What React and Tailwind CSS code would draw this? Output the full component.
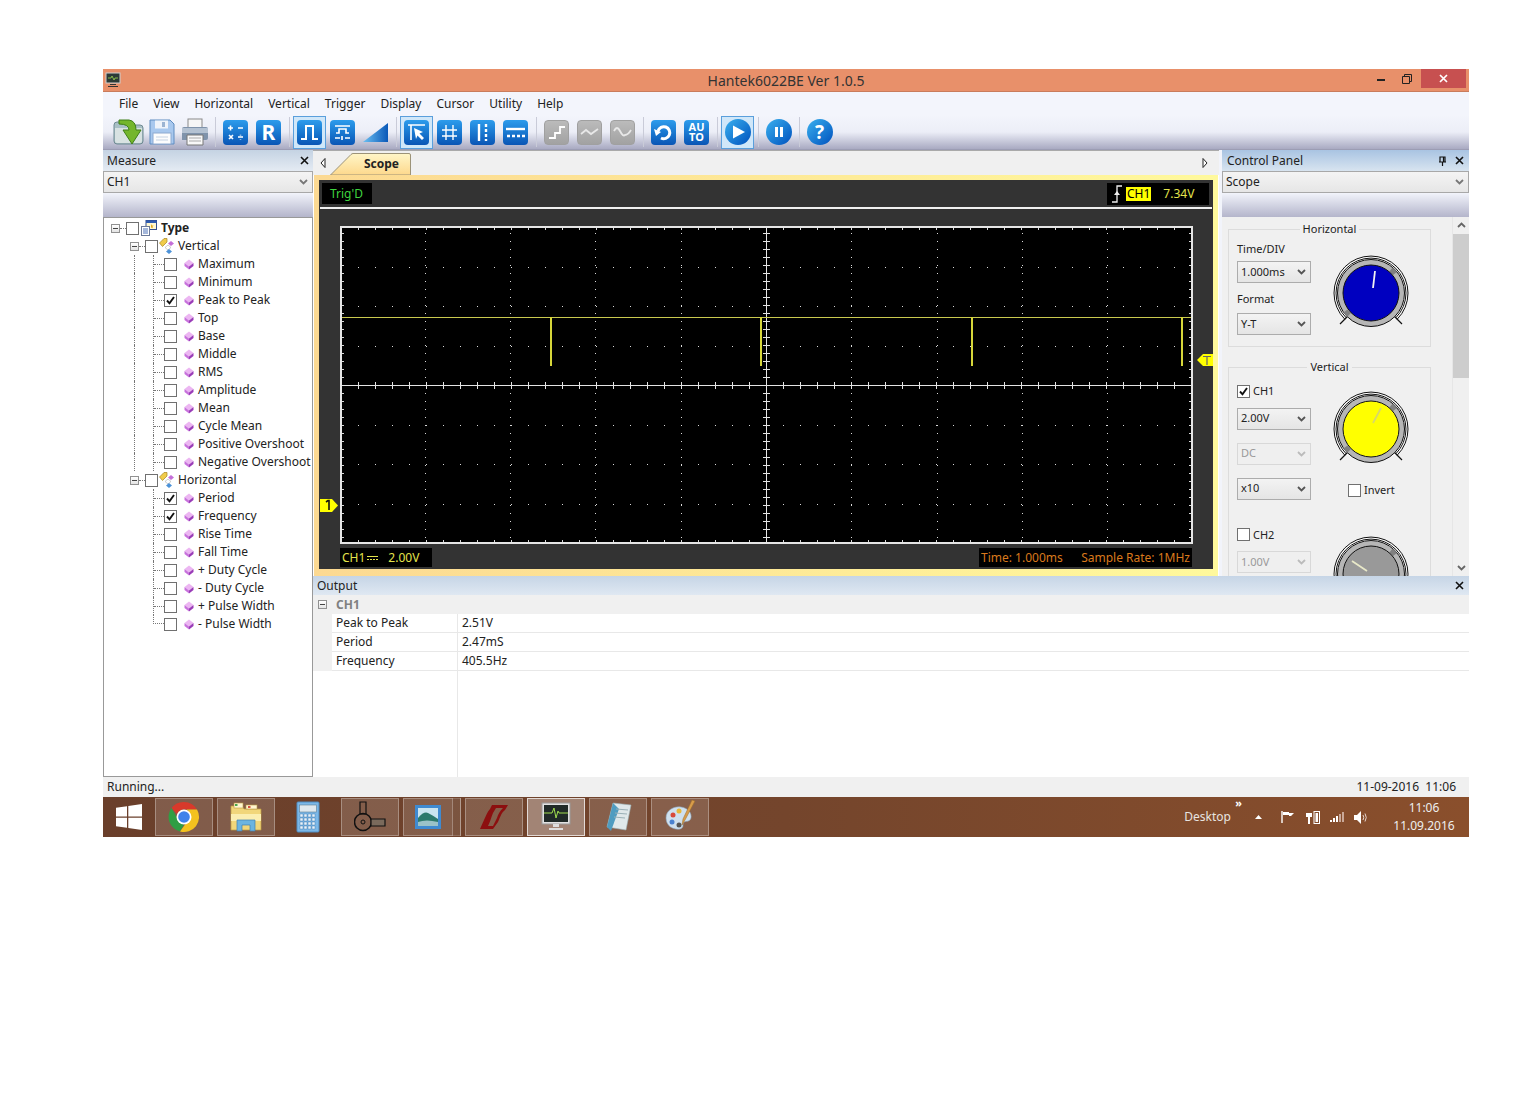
const MENU = ["File", "View", "Horizontal", "Vertical", "Trigger", "Display", "Cursor", "Utility", "Help"];

const VERTICAL_ITEMS = [
  ["Maximum"], ["Minimum"], ["Peak to Peak", true], ["Top"], ["Base"], ["Middle"], ["RMS"],
  ["Amplitude"], ["Mean"], ["Cycle Mean"], ["Positive Overshoot"], ["Negative Overshoot"],
];
const HORIZONTAL_ITEMS = [
  ["Period", true], ["Frequency", true], ["Rise Time"], ["Fall Time"],
  ["+ Duty Cycle"], ["- Duty Cycle"], ["+ Pulse Width"], ["- Pulse Width"],
];
const OUTPUT_ROWS = [["Peak to Peak", "2.51V"], ["Period", "2.47mS"], ["Frequency", "405.5Hz"]];

function Chevron({ color = "#555" }) {
  return (
    <svg width="9" height="6" viewBox="0 0 9 6">
      <path d="M1 1l3.5 3.5L8 1" fill="none" stroke={color} strokeWidth="1.8" />
    </svg>
  );
}

function CloseX({ size = 9 }) {
  return (
    <svg width={size} height={size} viewBox="0 0 9 9">
      <path d="M1 1l7 7M8 1l-7 7" stroke="#111" strokeWidth="1.6" />
    </svg>
  );
}

function Check({ on }) {
  return (
    <div className="w-[13px] h-[13px] shrink-0 border border-[#707070] bg-white flex items-center justify-center">
      {on && (
        <svg width="11" height="11" viewBox="0 0 11 11">
          <path d="M2 5.5l2.5 2.8L9 2" fill="none" stroke="#111" strokeWidth="1.9" />
        </svg>
      )}
    </div>
  );
}

function PlusBox() {
  return (
    <div className="w-[9px] h-[9px] shrink-0 border border-[#919191] bg-linear-to-b from-white to-[#e4e4e4] flex items-center justify-center">
      <div className="w-[5px] h-px bg-[#444]" />
    </div>
  );
}

function Diamond() {
  return (
    <svg width="10" height="11" viewBox="0 0 10 11" className="shrink-0">
      <path d="M5 0.5L9.5 4 5 7.5.5 4z" fill="#ecb6f2" />
      <path d="M.5 4L5 7.5V10.5L.5 7z" fill="#c872dc" />
      <path d="M9.5 4L5 7.5V10.5L9.5 7z" fill="#9a3cb8" />
    </svg>
  );
}

function TypeIcon() {
  return (
    <svg width="16" height="16" viewBox="0 0 16 16" className="shrink-0">
      <rect x="5" y="0.5" width="10.5" height="9" fill="#fff8d0" stroke="#334d8c" />
      <rect x="5" y="0.5" width="10.5" height="2.5" fill="#2f5bb0" />
      <path d="M10 4l1 1.4 1.6.2-1.1 1.1.3 1.6-1.8-.8" fill="#e3a91f" />
      <rect x="0.5" y="6.5" width="8" height="9" fill="#fff" stroke="#6c7a99" />
      <path d="M2 9h5M2 11h5M2 13h5" stroke="#4a70b8" />
    </svg>
  );
}

function GroupIcon() {
  return (
    <svg width="16" height="16" viewBox="0 0 16 16" className="shrink-0">
      <path d="M0.5 5L5 .5h3V4L3.5 8.5z" fill="#f0cc4a" stroke="#a78420" strokeWidth=".7" />
      <path d="M12 3l3 2.5-3 2.5-3-2.5z" fill="#c46fd8" />
      <path d="M9 7l3 2.5-3 2.5-3-2.5z" fill="#fff" stroke="#9c9c9c" strokeWidth=".5" />
      <path d="M10 11l3 2.5-3 2.5-3-2.5z" fill="#4c92d8" />
    </svg>
  );
}

function Leaf({ label, on, trunk, last }) {
  return (
    <div className="flex h-[18px] items-center">
      <div className="w-[30px]" />
      <div className={trunk ? "w-[19px] h-full border-l border-dotted border-[#777]" : "w-[19px]"} />
      {last ? (
        <div className="w-[11px] h-[9px] self-start border-l border-b border-dotted border-[#777]" />
      ) : (
        <div className="w-[11px] h-full border-l border-dotted border-[#777] flex items-center">
          <div className="w-full border-t border-dotted border-[#777]" />
        </div>
      )}
      <Check on={on} />
      <div className="ml-[7px]"><Diamond /></div>
      <span className="ml-[4px] whitespace-nowrap">{label}</span>
    </div>
  );
}

function Group({ label, trunk }) {
  return (
    <div className="flex h-[18px] items-center">
      <div className={trunk ? "w-[26px] h-full" : "w-[26px]"} />
      <PlusBox />
      <div className="w-[6px] border-t border-dotted border-[#777]" />
      <Check />
      <div className="ml-px"><GroupIcon /></div>
      <span className="ml-[3px]">{label}</span>
    </div>
  );
}

function DockHeader({ title, active, children }) {
  return (
    <div className={active
      ? "h-[21px] flex items-center px-[5px] bg-linear-to-b from-[#a9c4e2] to-[#d8e4f0]"
      : "h-[21px] flex items-center px-[4px] bg-linear-to-b from-[#c5d3e3] to-[#e4ebf3]"}>
      <span className="text-[#222]">{title}</span>
      <div className="ml-auto flex items-center gap-[8px]">{children}</div>
    </div>
  );
}

function DockSelect({ text }) {
  return (
    <div className="h-[22px] flex items-center justify-between px-[3px] border border-[#a8a8a8] bg-linear-to-b from-[#f4f4f4] to-[#e6e6e6]">
      <span>{text}</span>
      <span className="mr-[1px]"><Chevron color="#777" /></span>
    </div>
  );
}

function Band() {
  return <div className="h-[24px] bg-linear-to-b from-[#f2f4fb] to-[#b4b5cb]" />;
}

function MeasurePanel() {
  return (
    <div className="w-[210px] flex flex-col">
      <DockHeader title="Measure">
        <CloseX />
      </DockHeader>
      <DockSelect text="CH1" />
      <Band />
      <div className="flex-1 border border-[#999] bg-white pt-px overflow-hidden">
        <div className="flex h-[18px] items-center">
          <div className="w-[7px]" />
          <PlusBox />
          <div className="w-[6px] border-t border-dotted border-[#777]" />
          <Check />
          <div className="ml-[2px]"><TypeIcon /></div>
          <span className="ml-[4px] font-bold">Type</span>
        </div>
        <Group label="Vertical" />
        {VERTICAL_ITEMS.map(([label, on]) => (
          <Leaf key={label} label={label} on={on} trunk />
        ))}
        <Group label="Horizontal" />
        {HORIZONTAL_ITEMS.map(([label, on], i) => (
          <Leaf key={label} label={label} on={on} last={i === HORIZONTAL_ITEMS.length - 1} />
        ))}
      </div>
    </div>
  );
}

// toolbar icons
function BlueBtn({ gray, children }) {
  return (
    <div className={gray
      ? "w-[25px] h-[25px] rounded-[4px] bg-linear-to-b from-[#bbbbbb] to-[#a2a2a2] border border-[#a0a0a0] flex items-center justify-center"
      : "w-[25px] h-[25px] rounded-[4px] bg-linear-to-b from-[#2d9cec] to-[#0a55b5] flex items-center justify-center"}>
      {children}
    </div>
  );
}

function RoundBtn({ children }) {
  return (
    <div className="w-[26px] h-[26px] rounded-full bg-linear-to-br from-[#3bb0ee] to-[#0650bd] flex items-center justify-center">
      {children}
    </div>
  );
}

function Tool({ selected, children }) {
  return (
    <div className={selected
      ? "w-[33px] h-[33px] flex items-center justify-center border border-[#5a9fdc] bg-[#d0e7f9]"
      : "w-[33px] h-[33px] flex items-center justify-center"}>
      {children}
    </div>
  );
}

function Sep() {
  return (
    <div className="w-[8px] flex justify-center">
      <div className="w-px h-[30px] bg-[#c9cbd8]" />
    </div>
  );
}

function BtnSvg({ d, w = 1.8, color = "#fff" }) {
  return (
    <svg width="21" height="21" viewBox="0 0 21 21">
      <path d={d} fill="none" stroke={color} strokeWidth={w} />
    </svg>
  );
}

function Toolbar() {
  return (
    <div className="h-[35px] flex items-center pl-[9px] bg-linear-to-b from-[#f3f5fc] via-[#eceef7] to-[#a9aac2] border-b border-[#9c9db4]">
      <Tool>
        <svg width="32" height="30" viewBox="0 0 32 30">
          <path d="M1 8q0-3 3-3h7l2 3h14q3 0 3 3v13q0 3-3 3H4q-3 0-3-3z" fill="#a9c0c6" stroke="#6f8a92" />
          <path d="M2 11h27v13q0 2-2 2H4q-2 0-2-2z" fill="#d8e2e2" />
          <path d="M6 3h10q7 1 7 10h5l-9 14-9-14h6q0-6-10-6z" fill="#74b62c" stroke="#3f7f18" />
        </svg>
      </Tool>
      <Tool>
        <svg width="26" height="26" viewBox="0 0 26 26">
          <path d="M1 1h20l4 4v20H1z" fill="#a8c8ee" stroke="#5f8cc0" />
          <rect x="6" y="1.5" width="13" height="8" fill="#eef3fa" />
          <rect x="13" y="3" width="3" height="5" fill="#9bb4d2" />
          <rect x="4" y="14" width="18" height="11" fill="#fdfdfd" stroke="#8eaad0" />
          <path d="M7 18h12M7 21h12" stroke="#c6d3e3" />
        </svg>
      </Tool>
      <Tool>
        <svg width="30" height="28" viewBox="0 0 30 28">
          <rect x="8" y="1" width="14" height="10" fill="#f6f6f6" stroke="#8a8a8a" />
          <path d="M2 11q0-2 2-2h22q2 0 2 2v9q0 2-2 2H2z" fill="#7f93ab" />
          <path d="M2 10h26v5H2z" fill="#b4c2d2" />
          <path d="M7 17h16v10H7z" fill="#f8f8f8" stroke="#777" />
          <path d="M9 20h12M9 23h12" stroke="#aaa" />
        </svg>
      </Tool>
      <Sep />
      <Tool>
        <BlueBtn>
          <BtnSvg w={1.6} d="M3 6h5M5.500 3.500v5M13 6h5M4 13l4 4M8 13l-4 4M13 15h5M15.500 12.800v.6M15.500 17v.6" />
        </BlueBtn>
      </Tool>
      <Tool>
        <BlueBtn>
          <span className="font-['Liberation_Sans',sans-serif] text-[21px] font-bold leading-none text-white">R</span>
        </BlueBtn>
      </Tool>
      <Sep />
      <Tool selected>
        <BlueBtn><BtnSvg w={2} d="M2 17h5V4h7v13h5" /></BlueBtn>
      </Tool>
      <Tool>
        <BlueBtn><BtnSvg w={1.6} d="M3 4h15M4 11h3V7h7v4h3M3 16h5M10 14v4M13 16h5" /></BlueBtn>
      </Tool>
      <Tool>
        <svg width="27" height="21" viewBox="0 0 27 21">
          <defs>
            <linearGradient id="ramp" x1="0" y1="0" x2="1" y2="0">
              <stop offset="0" stopColor="#6cc0f2" />
              <stop offset="1" stopColor="#0a58b8" />
            </linearGradient>
          </defs>
          <path d="M1 20L26 1v19z" fill="url(#ramp)" />
        </svg>
      </Tool>
      <Sep />
      <Tool selected>
        <BlueBtn>
          <svg width="21" height="21" viewBox="0 0 21 21">
            <path d="M2 3h17M5 3v15" stroke="#fff" strokeWidth="1.6" fill="none" />
            <path d="M8 6l9 4-3.500 1.500L18 16l-2 2-4.500-4.500L10 17z" fill="#fff" />
          </svg>
        </BlueBtn>
      </Tool>
      <Tool>
        <BlueBtn>
          <BtnSvg w={1.4} d="M7 3v15M14 3v15M3 8h15M3 14h15" />
        </BlueBtn>
      </Tool>
      <Tool>
        <BlueBtn>
          <svg width="21" height="21" viewBox="0 0 21 21">
            <path d="M7 2v17" stroke="#fff" strokeWidth="2.400" />
            <path d="M14 2v17" stroke="#fff" strokeWidth="2.400" strokeDasharray="3 2" />
          </svg>
        </BlueBtn>
      </Tool>
      <Tool>
        <BlueBtn>
          <svg width="21" height="21" viewBox="0 0 21 21">
            <path d="M1 7h19" stroke="#fff" strokeWidth="2.400" />
            <path d="M2 14h18" stroke="#fff" strokeWidth="2.400" strokeDasharray="3 2" />
          </svg>
        </BlueBtn>
      </Tool>
      <Sep />
      <Tool>
        <BlueBtn gray><BtnSvg d="M3 16h6v-5h5V5h5" /></BlueBtn>
      </Tool>
      <Tool>
        <BlueBtn gray><BtnSvg d="M2 12l5-4 5 4 7-5" color="#e8e8e8" /></BlueBtn>
      </Tool>
      <Tool>
        <BlueBtn gray><BtnSvg d="M2 9q3-6 6 0t5 4q3 0 6-5" color="#e8e8e8" /></BlueBtn>
      </Tool>
      <Sep />
      <Tool>
        <BlueBtn>
          <svg width="21" height="21" viewBox="0 0 21 21">
            <path d="M8 16a6 6 0 1 0-3-7" fill="none" stroke="#fff" strokeWidth="3" />
            <path d="M1 7l7 3-5 4z" fill="#fff" />
          </svg>
        </BlueBtn>
      </Tool>
      <Tool>
        <BlueBtn>
          <span className="font-['Liberation_Sans',sans-serif] text-[11px] font-bold leading-[10px] text-white text-center">AU<br />TO</span>
        </BlueBtn>
      </Tool>
      <Sep />
      <Tool selected>
        <RoundBtn>
          <svg width="16" height="16" viewBox="0 0 16 16"><path d="M3 1.500l12 6.500-12 6.500z" fill="#fff" /></svg>
        </RoundBtn>
      </Tool>
      <Sep />
      <Tool>
        <RoundBtn>
          <svg width="12" height="12" viewBox="0 0 12 12"><path d="M2 1h3v10H2zM7 1h3v10H7z" fill="#fff" /></svg>
        </RoundBtn>
      </Tool>
      <Sep />
      <Tool>
        <RoundBtn>
          <span className="font-['Liberation_Sans',sans-serif] text-[19px] font-bold leading-none text-white">?</span>
        </RoundBtn>
      </Tool>
    </div>
  );
}

// scope trace and grid, coordinates inside the white frame
const CX = 424;
const CY = 157;
const W = 849;
const H = 314;
const colX = [-5, -4, -3, -2, -1, 1, 2, 3, 4].map((n) => Math.round(CX + n * 85.3));
const rowY = [-3, -2, -1, 1, 2, 3].map((n) => Math.round(CY + n * 39.5));
const stepX = [];
for (let x = CX % 17; x < W; x += 17) stepX.push(x);
const stepY = [];
for (let y = CY % 8; y < H; y += 8) stepY.push(y);
const SPIKES = [208, 418, 629, 839];

function ScopePlot() {
  return (
    <svg width={W} height={H} viewBox={`0 0 ${W} ${H}`} className="block" shapeRendering="crispEdges">
      {colX.map((x) => stepY.map((y) => <rect key={`${x}-${y}`} x={x} y={y} width="1" height="1" fill="#d8d8d8" />))}
      {rowY.map((y) => stepX.map((x) => <rect key={`${x}:${y}`} x={x} y={y} width="1" height="1" fill="#d8d8d8" />))}
      {stepX.map((x) => <rect key={`t${x}`} x={x} y="0" width="1" height="2" fill="#d8d8d8" />)}
      {stepX.map((x) => <rect key={`b${x}`} x={x} y={H - 2} width="1" height="2" fill="#d8d8d8" />)}
      {stepY.map((y) => <rect key={`l${y}`} x="0" y={y} width="2" height="1" fill="#d8d8d8" />)}
      {stepY.map((y) => <rect key={`r${y}`} x={W - 2} y={y} width="2" height="1" fill="#d8d8d8" />)}
      <rect x="0" y={CY} width={W} height="1" fill="#e4e4e4" />
      <rect x={CX} y="0" width="1" height={H} fill="#e4e4e4" />
      {stepX.map((x) => <rect key={`cx${x}`} x={x} y={CY - 3} width="1" height="7" fill="#e4e4e4" />)}
      {stepY.map((y) => <rect key={`cy${y}`} x={CX - 3} y={y} width="7" height="1" fill="#e4e4e4" />)}
      <rect x="0" y="89" width={W} height="1" fill="#c9c94e" />
      {SPIKES.map((x) => <rect key={x} x={x} y="89" width="2" height="49" fill="#d6d63a" />)}
    </svg>
  );
}

function ScopeView() {
  return (
    <div className="w-[906px] flex flex-col">
      <div className="h-[25px] flex items-end bg-[#f0f0f0] border-t border-[#aaa] relative">
        <svg width="6" height="10" viewBox="0 0 6 10" className="mb-[7px] ml-[7px]">
          <path d="M5 .5L1 5l4 4.500z" fill="#fff" stroke="#222" />
        </svg>
        <div className="relative w-[81px] h-[22px] ml-[4px] flex items-center justify-center">
          <svg width="81" height="22" viewBox="0 0 81 22" className="absolute inset-0">
            <defs>
              <linearGradient id="tab" x1="0" y1="0" x2="0" y2="1">
                <stop offset="0" stopColor="#fff6c8" />
                <stop offset="1" stopColor="#fdd88c" />
              </linearGradient>
            </defs>
            <path d="M.5 22L21 1.500q1-1 2-1h56q1.500 0 1.500 1.500V22z" fill="url(#tab)" stroke="#9c9378" />
          </svg>
          <span className="relative ml-[22px] font-bold">Scope</span>
        </div>
        <svg width="6" height="10" viewBox="0 0 6 10" className="ml-auto mb-[7px] mr-[11px]">
          <path d="M1 .5L5 5 1 9.500z" fill="#fff" stroke="#222" />
        </svg>
      </div>
      <div className="h-[401px] mx-px pt-[5px] px-[5px] pb-[7px] bg-linear-to-r from-[#fcd992] to-[#fff99c]">
        <div className="relative h-full bg-[#333] flex flex-col font-['Liberation_Sans',sans-serif] text-[12px]">
          <div className="h-[27px] flex items-start justify-between pt-[3px] pl-[3px] pr-[4px]">
            <div className="w-[50px] h-[21px] bg-black text-[#3fd43f] flex items-center pl-[8px]">Trig'D</div>
            <div className="w-[102px] h-[22px] bg-black flex items-center">
              <svg width="10" height="18" viewBox="0 0 10 18" className="ml-[5px]">
                <path d="M0 17h5V1h5" fill="none" stroke="#eee" strokeWidth="1.300" />
                <path d="M5 6l3 4H2z" fill="#eee" />
              </svg>
              <span className="ml-[4px] bg-[#ffff00] text-black px-px leading-[14px]">CH1</span>
              <span className="ml-[12px] text-[#e4e44c]">7.34V</span>
            </div>
          </div>
          <div className="h-[2px] mx-px bg-[#f0f0f0]" />
          <div className="mt-[17px] ml-[21px] w-[853px] h-[318px] border-2 border-[#e6e6e6] bg-black">
            <ScopePlot />
          </div>
          <div className="mt-[4px] h-[19px] flex">
            <div className="ml-[21px] w-[92px] bg-black text-[#e4e44c] flex items-center pl-[2px]">
              <span>CH1</span>
              <svg width="12" height="6" viewBox="0 0 12 6" className="ml-[2px]">
                <path d="M0 1.500h11" stroke="#e4e44c" />
                <path d="M0 4.500h11" stroke="#e4e44c" strokeDasharray="2 1" />
              </svg>
              <span className="ml-[9px]">2.00V</span>
            </div>
            <div className="ml-auto mr-[21px] w-[213px] bg-black text-[#d9791c] flex items-center justify-between px-[2px]">
              <span>Time: 1.000ms</span>
              <span>Sample Rate: 1MHz</span>
            </div>
          </div>
          {/* channel and trigger markers */}
          <div className="absolute left-[1px] top-[319px]">
            <svg width="18" height="13" viewBox="0 0 18 13">
              <path d="M0 0h12l6 6.500L12 13H0z" fill="#ffff00" />
              <path d="M6 3l2-1.500h1v9.500" fill="none" stroke="#111" strokeWidth="1.600" />
            </svg>
          </div>
          <div className="absolute right-0 top-[174px]">
            <svg width="16" height="12" viewBox="0 0 16 12">
              <path d="M16 0H6L0 6l6 6h10z" fill="#ffff00" />
              <path d="M6 2.500h8M10 2.500V11" fill="none" stroke="#666" strokeWidth="1.200" />
            </svg>
          </div>
        </div>
      </div>
    </div>
  );
}

function Combo({ text, disabled, className = "" }) {
  return (
    <div className={(disabled
      ? "border-[#d8d8d8] bg-[#efefef] text-[#999] "
      : "border-[#acacac] bg-linear-to-b from-[#f3f3f3] to-[#e5e5e5] text-[#222] ") +
      "w-[74px] h-[22px] border flex items-center justify-between pl-[3px] pr-[4px] " + className}>
      <span>{text}</span>
      <Chevron color={disabled ? "#bbb" : "#555"} />
    </div>
  );
}

function Knob({ fill, pointer, pointerColor, className = "" }) {
  return (
    <svg width="80" height="80" viewBox="0 0 80 80" className={"shrink-0 " + className}>
      <path d="M13.800 66.200A37 37 0 1 1 66.200 66.200" fill="#fff" stroke="#111" />
      <path d="M15.200 64.800A35 35 0 1 1 64.800 64.800" fill="none" stroke="#111" />
      <path d="M9 71l8-8M71 71l-8-8" stroke="#111" strokeWidth="1.200" />
      <circle cx="40" cy="40" r="33.500" fill="#b6b6b6" stroke="#111" />
      <path d="M60 16.500A31 31 0 0 1 64 20.500M18 62A31 31 0 0 1 14.500 58" fill="none" stroke="#808080" strokeWidth="5" />
      <circle cx="40" cy="40" r="28" fill={fill} stroke="#111" />
      <path d={pointer} stroke={pointerColor} strokeWidth="1.800" />
    </svg>
  );
}

function ControlPanel() {
  return (
    <div className="w-[247px] flex flex-col">
      <DockHeader title="Control Panel" active>
        <svg width="9" height="10" viewBox="0 0 9 10">
          <path d="M2 1h5v5H2zM1 6h7M4.500 6v4M5.500 1v5" fill="none" stroke="#111" strokeWidth="1.200" />
        </svg>
        <CloseX />
      </DockHeader>
      <DockSelect text="Scope" />
      <Band />
      <div className="flex-1 min-h-0 flex bg-[#f0f0f0] font-['Liberation_Sans',sans-serif] text-[11px] text-[#222]">
        <div className="w-[230px] pl-[6px] overflow-hidden">
          <fieldset className="mt-[6px] w-[203px] h-[124px] border border-[#dcdcdc]">
            <legend className="mx-auto px-[3px] leading-[12px]">Horizontal</legend>
            <div className="flex items-start pl-[8px]">
              <div className="w-[74px] pt-[7px]">
                <div className="h-[13px] leading-[13px]">Time/DIV</div>
                <Combo text="1.000ms" className="mt-[6px]" />
                <div className="h-[13px] leading-[13px] mt-[9px]">Format</div>
                <Combo text="Y-T" className="mt-[8px]" />
              </div>
              <Knob fill="#0000c0" pointer="M42 35L44 18" pointerColor="#f2f2f2" className="ml-[20px] mt-[18px]" />
            </div>
          </fieldset>
          <fieldset className="mt-[14px] w-[203px] h-[240px] border border-[#dcdcdc]">
            <legend className="mx-auto px-[3px] leading-[12px]">Vertical</legend>
            <div className="flex items-start pl-[8px]">
              <div className="w-[74px] pt-[10px]">
                <div className="flex items-center gap-[3px]"><Check on /><span>CH1</span></div>
                <Combo text="2.00V" className="mt-[8px]" />
                <Combo text="DC" disabled className="mt-[13px]" />
                <Combo text="x10" className="mt-[13px]" />
                <div className="flex items-center gap-[3px] mt-[27px]"><Check /><span>CH2</span></div>
                <Combo text="1.00V" disabled className="mt-[8px]" />
              </div>
              <div className="ml-[20px] pt-[16px] flex flex-col">
                <Knob fill="#ffff00" pointer="M42 34L50 19" pointerColor="#d8d86a" />
                <div className="mt-[13px] ml-[17px] flex items-center gap-[3px]"><Check /><span>Invert</span></div>
                <Knob fill="#999" pointer="M21 27L36 37" pointerColor="#e8e8c8" className="mt-[35px]" />
              </div>
            </div>
          </fieldset>
        </div>
        <div className="w-[17px] flex flex-col items-center bg-[#f0f0f0] border-l border-[#e6e6e6]">
          <div className="h-[17px] flex items-center rotate-180"><Chevron color="#666" /></div>
          <div className="w-full h-[144px] bg-[#cdcdcd]" />
          <div className="mt-auto h-[17px] flex items-center"><Chevron color="#666" /></div>
        </div>
      </div>
    </div>
  );
}

function OutputPanel() {
  return (
    <div className="flex-1 min-h-0 flex flex-col bg-white">
      <div className="h-[19px] flex items-center pl-[4px] pr-[5px] bg-linear-to-b from-[#c6d5e6] to-[#dfe8f2]">
        <span>Output</span>
        <span className="ml-auto"><CloseX /></span>
      </div>
      <div className="h-[19px] flex items-center bg-[#f0f0f0] pl-[5px]">
        <PlusBox />
        <span className="ml-[9px] font-bold text-[#808080]">CH1</span>
      </div>
      {OUTPUT_ROWS.map(([name, value]) => (
        <div key={name} className="h-[19px] flex">
          <div className="w-[19px] bg-[#f0f0f0]" />
          <div className="w-[126px] pl-[4px] flex items-center border-b border-r border-[#e8e8e8]">{name}</div>
          <div className="flex-1 pl-[4px] flex items-center border-b border-[#e8e8e8]">{value}</div>
        </div>
      ))}
      <div className="flex-1 flex">
        <div className="w-[145px] border-r border-[#e8e8e8]" />
      </div>
    </div>
  );
}

function TaskBtn({ active, bare, stack, children }) {
  const cls = active
    ? "bg-white/35 border-white/70"
    : bare
      ? "border-transparent"
      : "bg-white/15 border-white/30";
  return (
    <div className={"relative w-[58px] h-[38px] shrink-0 flex items-center justify-center border " + cls}>
      {children}
      {stack && (
        <div className="absolute right-[-1px] top-[-1px] bottom-[-1px] w-[9px] border-l border-r border-white/30 bg-[#6e4530]/40" />
      )}
    </div>
  );
}

function Taskbar() {
  return (
    <div className="h-[40px] flex items-center bg-linear-to-r from-[#6a3f2b] via-[#74452c] to-[#8a4f2c] text-white">
      <div className="w-[52px] flex justify-center">
        <svg width="26" height="26" viewBox="0 0 26 26">
          <path d="M0 3.800L11 2.300V12.400H0zM12.300 2.100L26 0V12.400H12.300zM0 13.800H11V23.800L0 22.300zM12.300 13.800H26V26L12.300 24z" fill="#fff" />
        </svg>
      </div>
      <div className="flex gap-[4px]">
        <TaskBtn>
          <svg width="32" height="32" viewBox="0 0 32 32">
            <path d="M16 1a15 15 0 0 1 13 7.500H16a7.500 7.500 0 0 0-7 4.500L3.500 7A15 15 0 0 1 16 1z" fill="#d8392b" />
            <path d="M3.500 7l6.500 11.500a7.500 7.500 0 0 0 6 5L12 30.500A15 15 0 0 1 3.500 7z" fill="#2f9e44" />
            <path d="M29 8.500A15 15 0 0 1 12 30.500l6.500-9a7.500 7.500 0 0 0 0-13z" fill="#f4c21f" />
            <circle cx="16" cy="16" r="7.500" fill="#fff" />
            <circle cx="16" cy="16" r="5.800" fill="#3f82ea" />
          </svg>
        </TaskBtn>
        <TaskBtn>
          <svg width="34" height="30" viewBox="0 0 34 30">
            <path d="M2 4h11l2 3h17v21H2z" fill="#f1d67a" stroke="#bd9c44" strokeWidth=".7" />
            <rect x="5" y="1" width="9" height="5" fill="#fff6d0" stroke="#bd9c44" strokeWidth=".6" />
            <rect x="6" y="2" width="2.500" height="2" fill="#4aa84a" />
            <rect x="17" y="3" width="11" height="4" fill="#fff6d0" stroke="#bd9c44" strokeWidth=".6" />
            <rect x="19" y="4" width="2.500" height="2" fill="#d85040" />
            <path d="M2 12h30v7H2z" fill="#fbeeb0" />
            <path d="M8 29V18h18v11h-5v-6h-8v6z" fill="#6cb4e0" stroke="#3f7fb0" strokeWidth=".7" />
          </svg>
        </TaskBtn>
        <TaskBtn bare>
          <svg width="24" height="32" viewBox="0 0 24 32">
            <rect x="1" y="1" width="22" height="30" rx="1" fill="#7cb8e8" stroke="#4f8ec4" />
            <rect x="3.500" y="4" width="17" height="7" fill="#dfe8ee" stroke="#5e7d92" strokeWidth=".6" />
            {[13, 17, 21, 25].map((y) => [4, 8, 12, 16].map((x) => (
              <rect key={`${x}-${y}`} x={x} y={y} width="3" height="3" fill="#e8f2fb" stroke="#3a74a8" strokeWidth=".4" />
            )))}
          </svg>
        </TaskBtn>
        <TaskBtn>
          <svg width="32" height="32" viewBox="0 0 32 32">
            <path d="M6 1h6v12H6z" fill="none" stroke="#111" strokeWidth="1.200" />
            <circle cx="9" cy="21" r="8.500" fill="none" stroke="#111" strokeWidth="1.500" />
            <circle cx="9" cy="21" r="2" fill="none" stroke="#111" />
            <path d="M17 18h14v7H17z" fill="#7a6a5c" stroke="#111" strokeWidth="1.200" />
          </svg>
        </TaskBtn>
        <TaskBtn stack>
          <svg width="28" height="26" viewBox="0 0 28 26" className="mr-[8px]">
            <rect x="1" y="1" width="26" height="24" fill="#3f8ad0" />
            <rect x="4" y="4" width="20" height="18" fill="#c9e4ef" />
            <path d="M4 14q6-7 10-5t10 6v7H4z" fill="#2c7a6c" />
            <path d="M4 18q8-3 20 0v4H4z" fill="#9ac2c8" />
          </svg>
        </TaskBtn>
        <TaskBtn>
          <svg width="32" height="26" viewBox="0 0 32 26">
            <path d="M14 1h16l-3 5c-4 3-5 8-7 12l-5 7H2l4-9c2-4 3-8 6-11zM18 4l-3 5c-2 5-3 9-5 13h5l4-8c1-4 3-7 6-10z" fill="#8c0f0f" fillRule="evenodd" />
          </svg>
        </TaskBtn>
        <TaskBtn active>
          <svg width="30" height="30" viewBox="0 0 30 30">
            <rect x="1" y="1" width="28" height="21" fill="#e2e2e2" stroke="#999" />
            <rect x="3" y="3" width="24" height="17" fill="#202a28" />
            <path d="M3 11h8l2-5 2 10 2-7 1 2h9" fill="none" stroke="#9fdc4f" />
            <path d="M12 22h6v3h-6zM8 26h14v2H8z" fill="#ddd" />
          </svg>
        </TaskBtn>
        <TaskBtn>
          <svg width="30" height="32" viewBox="0 0 30 32">
            <path d="M10 2l18 2-5 25-19-3z" fill="#dfe8ea" stroke="#9ab0b6" strokeWidth=".6" />
            <path d="M10 2L4 26l4 4 8-22z" fill="#4f9cc0" />
            <path d="M13 8l12 1M12 12l12 1M11 16l11 1" stroke="#9ab0b6" />
          </svg>
        </TaskBtn>
        <TaskBtn>
          <svg width="34" height="34" viewBox="0 0 34 34">
            <path d="M3 18c0-8 8-12 15-11 7 1 11 6 10 11-1 4-5 3-7 4-2 2 0 4-2 6-3 3-16 1-16-10z" fill="#cfe0ee" stroke="#8aa2b8" strokeWidth=".6" />
            <circle cx="10" cy="15" r="2.500" fill="#d84a3a" />
            <circle cx="16" cy="11" r="2.500" fill="#e8b93a" />
            <circle cx="9" cy="22" r="2.500" fill="#4a82d0" />
            <circle cx="16" cy="25" r="2.500" fill="#555" />
            <path d="M32 1l-10 19-3 5 1-6 9-19z" fill="#d89c4a" stroke="#9a6a28" strokeWidth=".5" />
          </svg>
        </TaskBtn>
      </div>
      <div className="ml-auto relative flex items-center h-full">
        <span className="text-[#e8e4e0] text-[12px] mr-[24px]">Desktop</span>
        <span className="absolute left-[51px] top-[-1px] text-[11px] leading-[14px] font-bold">»</span>
        <svg width="7" height="4" viewBox="0 0 7 4" className="mr-[19px]"><path d="M3.500 0L7 4H0z" fill="#fff" /></svg>
        <svg width="14" height="12" viewBox="0 0 14 12" className="mr-[11px]">
          <path d="M1 0v12" stroke="#fff" strokeWidth="1.400" />
          <path d="M2 1h6v1h5l-3 3 3 0v0H8V4H2z" fill="#fff" />
        </svg>
        <svg width="14" height="14" viewBox="0 0 14 14" className="mr-[10px]">
          <path d="M1.500 0v3M4.500 0v3M0 3h6v4H4v7H2V7H0z" fill="#fff" />
          <rect x="8" y="1.500" width="5.500" height="12" fill="none" stroke="#fff" />
          <rect x="9.500" y="3" width="2.500" height="9" fill="#fff" />
        </svg>
        <svg width="14" height="10" viewBox="0 0 14 10" className="mr-[10px]">
          <path d="M0 8h2v2H0zM3 6h2v4H3zM6 4h2v6H6z" fill="#fff" />
          <path d="M9 2h2v8H9zM12 0h2v10h-2z" fill="#c9a898" />
        </svg>
        <svg width="15" height="13" viewBox="0 0 15 13" className="mr-[19px]">
          <path d="M0 4h3l4-4v13L3 9H0z" fill="#fff" />
          <path d="M9 4q1.500 2.500 0 5M11 2.500q2.500 4 0 8" fill="none" stroke="#e8d8d0" />
        </svg>
        <div className="w-[72px] mr-[9px] text-center text-[12px] leading-[18px] text-[#eee]">
          <div>11:06</div>
          <div>11.09.2016</div>
        </div>
      </div>
    </div>
  );
}

export default function App() {
  return (
    <div className="h-[1105px] bg-white pt-[69px] pl-[103px] font-['Noto_Sans','Open_Sans',sans-serif] text-[12px] text-[#222]">
      <div className="w-[1366px] h-[768px] flex flex-col">
        <div className="h-[23px] relative flex items-center justify-center bg-[#e8906a] border-b border-[#c97c5c]">
          <svg width="16" height="16" viewBox="0 0 16 16" className="absolute left-[2px] top-[3px]">
            <rect x="1" y="1" width="14" height="10" fill="#2c3a36" stroke="#cfcfcf" />
            <path d="M3 6h3l1-2 2 4 1-2h3" fill="none" stroke="#9fdc4f" strokeWidth=".8" />
            <path d="M5 12h6v1H5zM3 14h10v1H3z" fill="#333" />
          </svg>
          <span className="text-[14px] text-[#333]">Hantek6022BE Ver 1.0.5</span>
          <div className="absolute right-[3px] top-0 h-[19px] flex items-center">
            <div className="w-[8px] h-[2px] mr-[17px] mt-[3px] bg-[#222]" />
            <svg width="10" height="10" viewBox="0 0 10 10" className="mr-[9px]">
              <path d="M.5 2.500h7v7h-7zM2.500 2.500v-2h7v7h-2" fill="none" stroke="#222" />
            </svg>
            <div className="w-[45px] h-[19px] bg-[#c75050] flex items-center justify-center">
              <svg width="9" height="9" viewBox="0 0 9 9">
                <path d="M1 1l7 7M8 1l-7 7" stroke="#fff" strokeWidth="1.700" />
              </svg>
            </div>
          </div>
        </div>
        <div className="h-[23px] flex items-center gap-[15px] pl-[16px] bg-[#f3f5fc]">
          {MENU.map((item) => <span key={item}>{item}</span>)}
        </div>
        <Toolbar />
        <div className="h-[627px] flex">
          <MeasurePanel />
          <div className="flex-1 min-w-0 flex flex-col">
            <div className="h-[426px] flex">
              <ScopeView />
              <div className="w-[3px] bg-[#f2f4fb]" />
              <ControlPanel />
            </div>
            <OutputPanel />
          </div>
        </div>
        <div className="h-[20px] flex items-center justify-between px-[4px] pr-[13px] bg-[#f0f0f0]">
          <span>Running...</span>
          <span>11-09-2016&nbsp;&nbsp;11:06</span>
        </div>
        <Taskbar />
      </div>
    </div>
  );
}
